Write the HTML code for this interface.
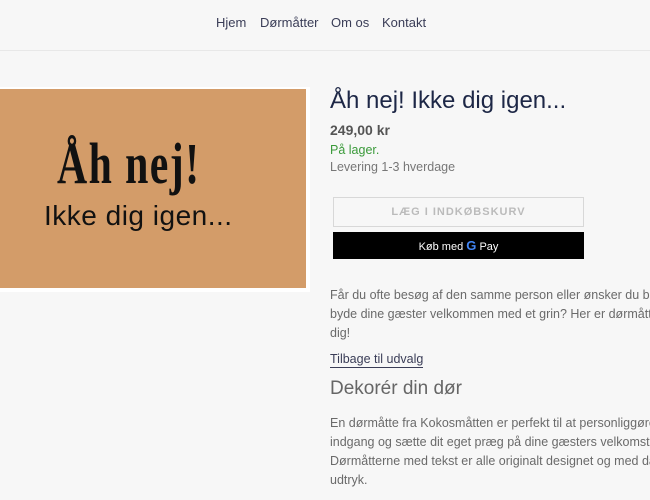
<!DOCTYPE html>
<html><head><meta charset="utf-8"><style>
html,body{margin:0;width:650px;height:500px;overflow:hidden}
body{background:#f7f7f7;font-family:"Liberation Sans",sans-serif;position:relative}
#w{position:absolute;left:0;top:0;width:650px;height:500px;overflow:hidden}
.a{position:absolute;white-space:nowrap}
nav{position:absolute;top:0;left:0;width:650px;height:50px;border-bottom:1px solid #e8e8e8}
nav span{position:absolute;top:15px;font-size:13px;color:#3a3d57}
.mat{position:absolute;left:0;top:87px;width:310px;height:205px;background:#fff}
.mat div{position:absolute;left:0;top:2px;width:306px;height:199px;background:#d39c69}
.body{font-size:12.5px;color:#6a6a6a;line-height:19px}
</style></head><body><div id="w">
<nav><span style="left:216px">Hjem</span><span style="left:260px">Dørmåtter</span><span style="left:331px">Om os</span><span style="left:382px">Kontakt</span></nav>
<div class="mat"><div>
<span class="a" style="left:57px;top:44px;font-family:'Liberation Serif',serif;font-weight:bold;font-size:58px;line-height:62px;color:#111;transform:scaleX(0.72);transform-origin:left;letter-spacing:2px">Åh nej!</span>
<span class="a" style="left:44px;top:111px;font-size:28px;color:#111;letter-spacing:0.5px">Ikke dig igen...</span>
</div></div>
<div class="a" style="left:330px;top:87px;font-size:24px;color:#1d2746">Åh nej! Ikke dig igen...</div>
<div class="a" style="left:330px;top:122px;font-size:14px;font-weight:bold;color:#555">249,00 kr</div>
<div class="a" style="left:330px;top:143px;font-size:12.5px;color:#3a9a3a">På lager.</div>
<div class="a" style="left:330px;top:160px;font-size:12.5px;color:#777">Levering 1-3 hverdage</div>
<div class="a" style="left:333px;top:197px;width:249px;height:28px;border:1px solid #d8d8d8;text-align:center;line-height:28px;font-size:11px;letter-spacing:1px;color:#bbb;font-weight:bold">LÆG I INDKØBSKURV</div>
<div class="a" style="left:333px;top:232px;width:251px;height:27px;background:#000;color:#fff;text-align:center;line-height:27px;font-size:11px">Køb med <b style="color:#4285f4;font-size:13px">G</b> Pay</div>
<div class="a body" style="left:330px;top:286px">Får du ofte besøg af den samme person eller ønsker du blot at<br>byde dine gæster velkommen med et grin? Her er dørmåtten til<br>dig!</div>
<div class="a" style="left:330px;top:351px;font-size:12.5px;color:#3a3d57;border-bottom:1px solid #3a3d57;line-height:16px">Tilbage til udvalg</div>
<div class="a" style="left:330px;top:378px;font-size:19px;color:#666">Dekorér din dør</div>
<div class="a body" style="left:330px;top:414px">En dørmåtte fra Kokosmåtten er perfekt til at personliggøre din<br>indgang og sætte dit eget præg på dine gæsters velkomst.<br>Dørmåtterne med tekst er alle originalt designet og med danske<br>udtryk.</div>
</div></body></html>
